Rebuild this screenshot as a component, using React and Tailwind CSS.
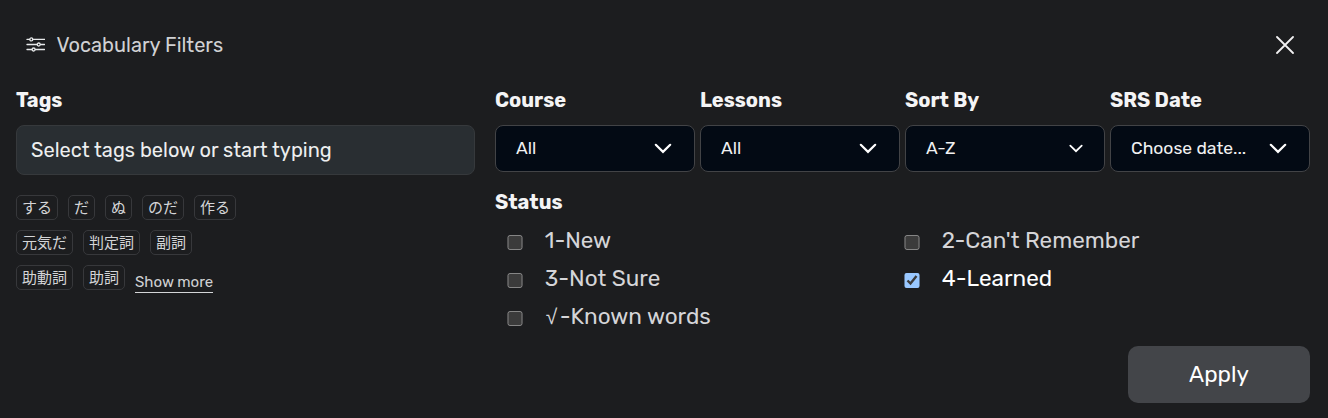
import React from 'react';

const tagRows = [
  ['する', 'だ', 'ぬ', 'のだ', '作る'],
  ['元気だ', '判定詞', '副詞'],
  ['助動詞', '助詞'],
];

const selects = [
  { label: 'Course', value: 'All' },
  { label: 'Lessons', value: 'All' },
  { label: 'Sort By', value: 'A-Z', small: true },
  { label: 'SRS Date', value: 'Choose date...' },
];

const statuses = [
  { label: '1-New' },
  { label: "2-Can't Remember" },
  { label: '3-Not Sure' },
  { label: '4-Learned', checked: true },
  { symbol: '√', label: '-Known words' },
];

const SlidersIcon = () => (
  <svg width="20" height="16" viewBox="0 0 20 16" fill="none" stroke="#e8eaeb" strokeWidth="1.3" strokeLinecap="round">
    <path d="M2 2.4h2.6M8 2.4h11.6M2 7.5h9.8M15.6 7.5h4M2 12.5h4.8M10.4 12.5h9.2" />
    <circle cx="6.3" cy="2.4" r="1.5" />
    <circle cx="13.7" cy="7.5" r="1.5" />
    <circle cx="8.6" cy="12.5" r="1.5" />
  </svg>
);

const Chevron = ({ small }) =>
  small ? (
    <svg width="14" height="9" viewBox="0 0 14 9" fill="none" stroke="#fff" strokeWidth="1.8" strokeLinecap="round">
      <path d="M1.3 1.7 7 7.2l5.7-5.5" />
    </svg>
  ) : (
    <svg className="mr-[1px]" width="18" height="11" viewBox="0 0 18 11" fill="none" stroke="#fff" strokeWidth="2.2" strokeLinecap="round">
      <path d="M1.8 1.8 9 8.9l7.2-7.1" />
    </svg>
  );

const SelectField = ({ label, value, small }) => (
  <div className="w-[200px]">
    <div className="h-[50px] pt-[10px] text-xl leading-[30px] font-bold text-[#f4f4f5]">{label}</div>
    <button className="flex h-[47px] w-full items-center justify-between rounded-lg border border-[#424346] bg-[#030a14] pr-[21px] pl-5 text-[17.5px] text-[#f1f1f2]">
      <span>{value}</span>
      <Chevron small={small} />
    </button>
  </div>
);

const StatusOption = ({ symbol, label, checked }) => (
  <label className="flex h-[38px] items-center text-[#d5d5d8] has-checked:text-white">
    <input type="checkbox" defaultChecked={checked} className="mt-[5px] ml-3 h-[15.5px] w-[15.5px] [color-scheme:dark]" />
    <span className="mt-px ml-[22.3px] text-[22.5px] leading-[38px] whitespace-nowrap">
      {symbol && <span className="inline-block w-[15px] pl-px font-['Liberation_Sans',sans-serif] text-[21px] leading-none">{symbol}</span>}
      {label}
    </span>
  </label>
);

const App = () => (
  <div className="h-[418px] w-[1328px] overflow-hidden bg-[#1c1d1f] font-[Rubik,Roboto,'Noto_Sans_CJK_JP',sans-serif]">
    <header className="flex h-20 items-center justify-between pt-[10px] pr-[34px] pl-[25px]">
      <div className="flex items-center gap-[11.5px]">
        <SlidersIcon />
        <h2 className="text-xl leading-[30px] text-[#d0d1d3]">Vocabulary Filters</h2>
      </div>
      <button aria-label="Close">
        <svg width="18" height="18" viewBox="0 0 18 18" fill="none" stroke="#f1f1f2" strokeWidth="1.8" strokeLinecap="round">
          <path d="M1 1l16 16M17 1 1 17" />
        </svg>
      </button>
    </header>

    <div className="flex gap-5 pl-4">
      <section className="w-[459px] pt-[5px]">
        <div className="text-xl leading-[30px] font-bold text-[#f4f4f5]">Tags</div>
        <input
          placeholder="Select tags below or start typing"
          className="mt-[10px] block h-[50px] w-full rounded-lg border border-[#36393c] bg-[#292e32] px-[14px] text-xl text-white placeholder:text-[#edeeef]"
        />
        <div className="mt-5 flex flex-col gap-[10px]">
          {tagRows.map((row, i) => (
            <div key={i} className="flex h-[25px] gap-[10px]">
              {row.map((tag) => (
                <button key={tag} className="h-[25px] rounded-[5px] border border-[#37383b] px-[5px] pb-px font-['Noto_Sans_CJK_JP',sans-serif] text-[15px] leading-[22px] text-[#d4d5d7]">
                  {tag}
                </button>
              ))}
              {i === tagRows.length - 1 && (
                <button className="mt-[8px] h-5 border-b border-[#d4d5d7] pb-px text-[15px] leading-[17px] text-[#d0d1d3]">
                  Show more
                </button>
              )}
            </div>
          ))}
        </div>
      </section>

      <section className="w-[815px]">
        <div className="-mt-[5px] flex gap-[5px]">
          {selects.map((field) => (
            <SelectField key={field.label} {...field} />
          ))}
        </div>
        <div className="mt-[15px] text-xl leading-[30px] font-bold text-[#f4f4f5]">Status</div>
        <div className="mt-[4px] grid grid-cols-[397px_1fr]">
          {statuses.map((status) => (
            <StatusOption key={status.label} {...status} />
          ))}
        </div>
        <div className="mt-[11px] flex justify-end">
          <button className="h-[57px] w-[182px] rounded-[10px] bg-[#434549] text-[22.5px] text-white">Apply</button>
        </div>
      </section>
    </div>
  </div>
);

export default App;
